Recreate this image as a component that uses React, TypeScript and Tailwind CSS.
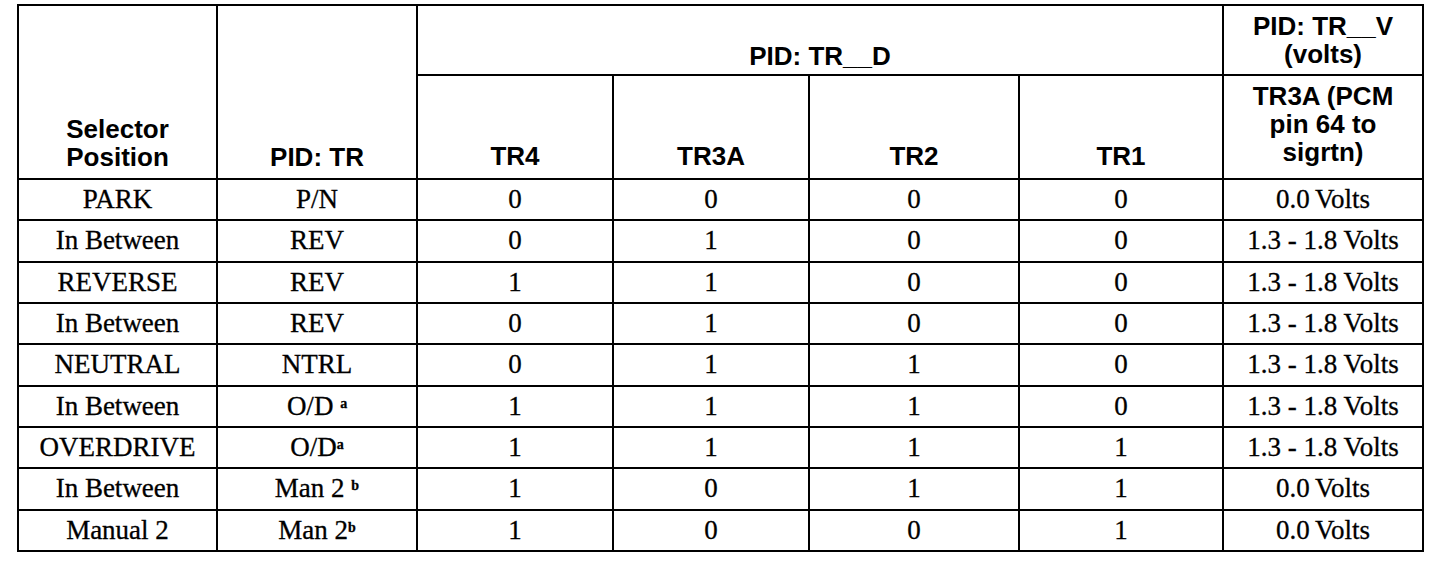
import React from "react"

type Row = {
  position: string
  tr: React.ReactNode
  tr4: string
  tr3a: string
  tr2: string
  tr1: string
  volts: string
}

const Sup = ({ children }: { children: React.ReactNode }) => (
  <sup className="text-[14px] font-bold">{children}</sup>
)

const rows: Row[] = [
  { position: "PARK", tr: "P/N", tr4: "0", tr3a: "0", tr2: "0", tr1: "0", volts: "0.0\u2009Volts" },
  { position: "In Between", tr: "REV", tr4: "0", tr3a: "1", tr2: "0", tr1: "0", volts: "1.3 - 1.8 Volts" },
  { position: "REVERSE", tr: "REV", tr4: "1", tr3a: "1", tr2: "0", tr1: "0", volts: "1.3 - 1.8 Volts" },
  { position: "In Between", tr: "REV", tr4: "0", tr3a: "1", tr2: "0", tr1: "0", volts: "1.3 - 1.8 Volts" },
  { position: "NEUTRAL", tr: "NTRL", tr4: "0", tr3a: "1", tr2: "1", tr1: "0", volts: "1.3 - 1.8 Volts" },
  {
    position: "In Between",
    tr: (
      <>
        O/D <Sup>a</Sup>
      </>
    ),
    tr4: "1",
    tr3a: "1",
    tr2: "1",
    tr1: "0",
    volts: "1.3 - 1.8 Volts",
  },
  {
    position: "OVERDRIVE",
    tr: (
      <>
        O/D<Sup>a</Sup>
      </>
    ),
    tr4: "1",
    tr3a: "1",
    tr2: "1",
    tr1: "1",
    volts: "1.3 - 1.8 Volts",
  },
  {
    position: "In Between",
    tr: (
      <>
        Man 2 <Sup>b</Sup>
      </>
    ),
    tr4: "1",
    tr3a: "0",
    tr2: "1",
    tr1: "1",
    volts: "0.0\u2009Volts",
  },
  {
    position: "Manual 2",
    tr: (
      <>
        Man 2<Sup>b</Sup>
      </>
    ),
    tr4: "1",
    tr3a: "0",
    tr2: "0",
    tr1: "1",
    volts: "0.0\u2009Volts",
  },
]

const th = "border-2 border-black align-bottom text-center font-bold text-[26px] leading-[28px] font-['Liberation_Sans',Arial,sans-serif] px-1"
const td = "border-2 border-black text-center align-middle text-[27px] leading-none font-['Liberation_Serif','Times_New_Roman',serif] [-webkit-text-stroke:0.3px_black] px-1"

export default function App() {
  return (
    <div className="min-h-screen w-full bg-white text-black pt-[4px] pl-[17px]">
      <table className="table-fixed border-collapse w-[1405px]">
        <colgroup>
          <col className="w-[199px]" />
          <col className="w-[200px]" />
          <col className="w-[196px]" />
          <col className="w-[196px]" />
          <col className="w-[210px]" />
          <col className="w-[204px]" />
          <col className="w-[200px]" />
        </colgroup>
        <thead>
          <tr className="h-[70px]">
            <th rowSpan={2} className={`${th} pb-[7px]`}>
              Selector
              <br />
              Position
            </th>
            <th rowSpan={2} className={`${th} pb-[7px]`}>
              PID: TR
            </th>
            <th colSpan={4} className={`${th} pb-[4px]`}>
              PID: TR__D
            </th>
            <th className={`${th} text-[25px] leading-[27px] pb-[6px]`}>
              PID: TR__V
              <br />
              (volts)
            </th>
          </tr>
          <tr className="h-[104px]">
            <th className={`${th} pb-[8px]`}>TR4</th>
            <th className={`${th} pb-[8px]`}>TR3A</th>
            <th className={`${th} pb-[8px]`}>TR2</th>
            <th className={`${th} pb-[8px]`}>TR1</th>
            <th className={`${th} text-[25px] leading-[27px] pb-[12px]`}>
              TR3A (PCM
              <br />
              pin 64 to
              <br />
              sigrtn)
            </th>
          </tr>
        </thead>
        <tbody>
          {rows.map((r, i) => (
            <tr key={i} className="h-[41.33px]">
              <td className={td}>{r.position}</td>
              <td className={td}>{r.tr}</td>
              <td className={td}>{r.tr4}</td>
              <td className={td}>{r.tr3a}</td>
              <td className={td}>{r.tr2}</td>
              <td className={td}>{r.tr1}</td>
              <td className={td}>{r.volts}</td>
            </tr>
          ))}
        </tbody>
      </table>
    </div>
  )
}
